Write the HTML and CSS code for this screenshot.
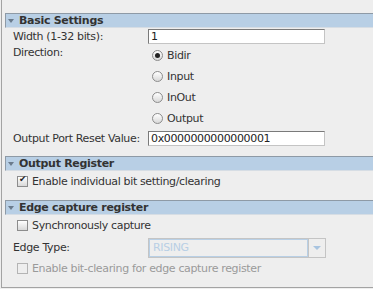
FILE: index.html
```html
<!DOCTYPE html>
<html lang="en">
<head>
    <meta charset="UTF-8">
    <title>PIO Settings</title>
    <link rel="stylesheet" href="styles.css">
</head>
<body>
    <div class="panel">
        <div class="section">
            <div class="section-head"><span class="arrow"></span>Basic Settings</div>
            <div class="section-body basic">
                <div class="row">
                    <span class="label">Width (1-32 bits):</span>
                    <span class="field">1</span>
                </div>
                <div class="row row-top">
                    <span class="label">Direction:</span>
                    <div class="radios">
                        <div class="radio checked"><span class="dot"></span>Bidir</div>
                        <div class="radio"><span class="dot"></span>Input</div>
                        <div class="radio"><span class="dot"></span>InOut</div>
                        <div class="radio"><span class="dot"></span>Output</div>
                    </div>
                </div>
                <div class="row reset-row">
                    <span class="label">Output Port Reset Value:</span>
                    <span class="field">0x0000000000000001</span>
                </div>
            </div>
        </div>

        <div class="section">
            <div class="section-head"><span class="arrow"></span>Output Register</div>
            <div class="section-body output">
                <div class="check checked"><span class="box"></span>Enable individual bit setting/clearing</div>
            </div>
        </div>

        <div class="section">
            <div class="section-head"><span class="arrow"></span>Edge capture register</div>
            <div class="section-body">
                <div class="check"><span class="box"></span>Synchronously capture</div>
                <div class="row combo-row">
                    <span class="label">Edge Type:</span>
                    <div class="combo disabled">
                        <span class="combo-value">RISING</span>
                        <span class="combo-button"><span class="combo-arrow"></span></span>
                    </div>
                </div>
                <div class="check disabled"><span class="box"></span>Enable bit-clearing for edge capture register</div>
            </div>
        </div>
    </div>
</body>
</html>
```

FILE: styles.css
```css
body {
    margin: 0;
    background-color: #eeeeee;
    font-family: "DejaVu Sans", sans-serif;
    font-size: 11px;
    letter-spacing: -0.35px;
    color: #333333;
}
.panel {
    border-left: 1px solid #a3a3a3;
    border-bottom: 1px solid #a3a3a3;
    margin-left: 1px;
    padding-top: 13px;
    height: 274px;
    overflow: hidden;
}
.section-head {
    margin-left: 3px;
    height: 13px;
    line-height: 13px;
    background-color: #b8cfe5;
    border-top: 1px solid #8e9aa6;
    border-left: 1px solid #8e9aa6;
    border-bottom: 1px solid #d6dde4;
    font-weight: bold;
    letter-spacing: -0.3px;
    color: #333333;
    display: flex;
    align-items: center;
}
.arrow {
    width: 0;
    height: 0;
    margin: 0 5px 0 2px;
    border-left: 3px solid transparent;
    border-right: 3px solid transparent;
    border-top: 4px solid #6b7b8c;
}
.section-body {
    padding: 0 0 0 11px;
}
.section-body.basic {
    padding-top: 1px;
    padding-bottom: 10px;
}
.section-body.output {
    padding-bottom: 8px;
}
.row {
    display: flex;
    align-items: center;
    white-space: nowrap;
}
.row-top {
    align-items: flex-start;
    margin-top: 1px;
}
.row-top .label {
    padding-top: 1px;
}
.reset-row {
    margin-top: 2px;
}
.label {
    width: 135px;
    flex: none;
}
.field {
    width: 173px;
    height: 13px;
    line-height: 13px;
    padding-left: 2px;
    background-color: white;
    border-top: 1px solid #7a7a7a;
    border-left: 1px solid #7a7a7a;
    border-right: 1px solid #c4c4c4;
    border-bottom: 1px solid #c4c4c4;
    color: #222222;
}
.radios {
    display: flex;
    flex-direction: column;
    margin-left: 4px;
}
.radio {
    display: flex;
    align-items: center;
    height: 21px;
}
.dot {
    width: 9px;
    height: 9px;
    border-radius: 50%;
    border: 1px solid #8c8c8c;
    background: linear-gradient(#ffffff, #d8d8d8);
    margin-right: 4px;
    position: relative;
}
.radio.checked .dot::after {
    content: "";
    position: absolute;
    left: 2px;
    top: 2px;
    width: 5px;
    height: 5px;
    border-radius: 50%;
    background-color: #222222;
}
.check {
    display: flex;
    align-items: center;
    height: 21px;
    margin-left: 4px;
    white-space: nowrap;
}
.box {
    width: 9px;
    height: 9px;
    border: 1px solid #8c8c8c;
    background: linear-gradient(#ffffff, #d8d8d8);
    margin-right: 4px;
    position: relative;
}
.check.checked .box::after {
    content: "\2714";
    position: absolute;
    left: 1px;
    top: -3px;
    font-size: 9px;
    color: #222222;
}
.check.disabled {
    color: #9a9a9a;
}
.check.disabled .box {
    border-color: #b4b4b4;
    background: #eeeeee;
}
.combo-row {
    height: 22px;
    align-items: flex-end;
}
.combo-row .label {
    align-self: center;
    padding-top: 1px;
}
.combo {
    display: flex;
    width: 176px;
    height: 18px;
    border: 1px solid #c4c4c4;
}
.combo-value {
    flex: 1;
    border: 1px solid #b8cfe5;
    padding-left: 3px;
    line-height: 16px;
    color: #b8cfe5;
}
.combo-button {
    width: 16px;
    border-left: 1px solid #c4c4c4;
    display: flex;
    align-items: center;
    justify-content: center;
}
.combo-arrow {
    width: 0;
    height: 0;
    border-left: 4px solid transparent;
    border-right: 4px solid transparent;
    border-top: 4px solid #a8c4e0;
}
```
